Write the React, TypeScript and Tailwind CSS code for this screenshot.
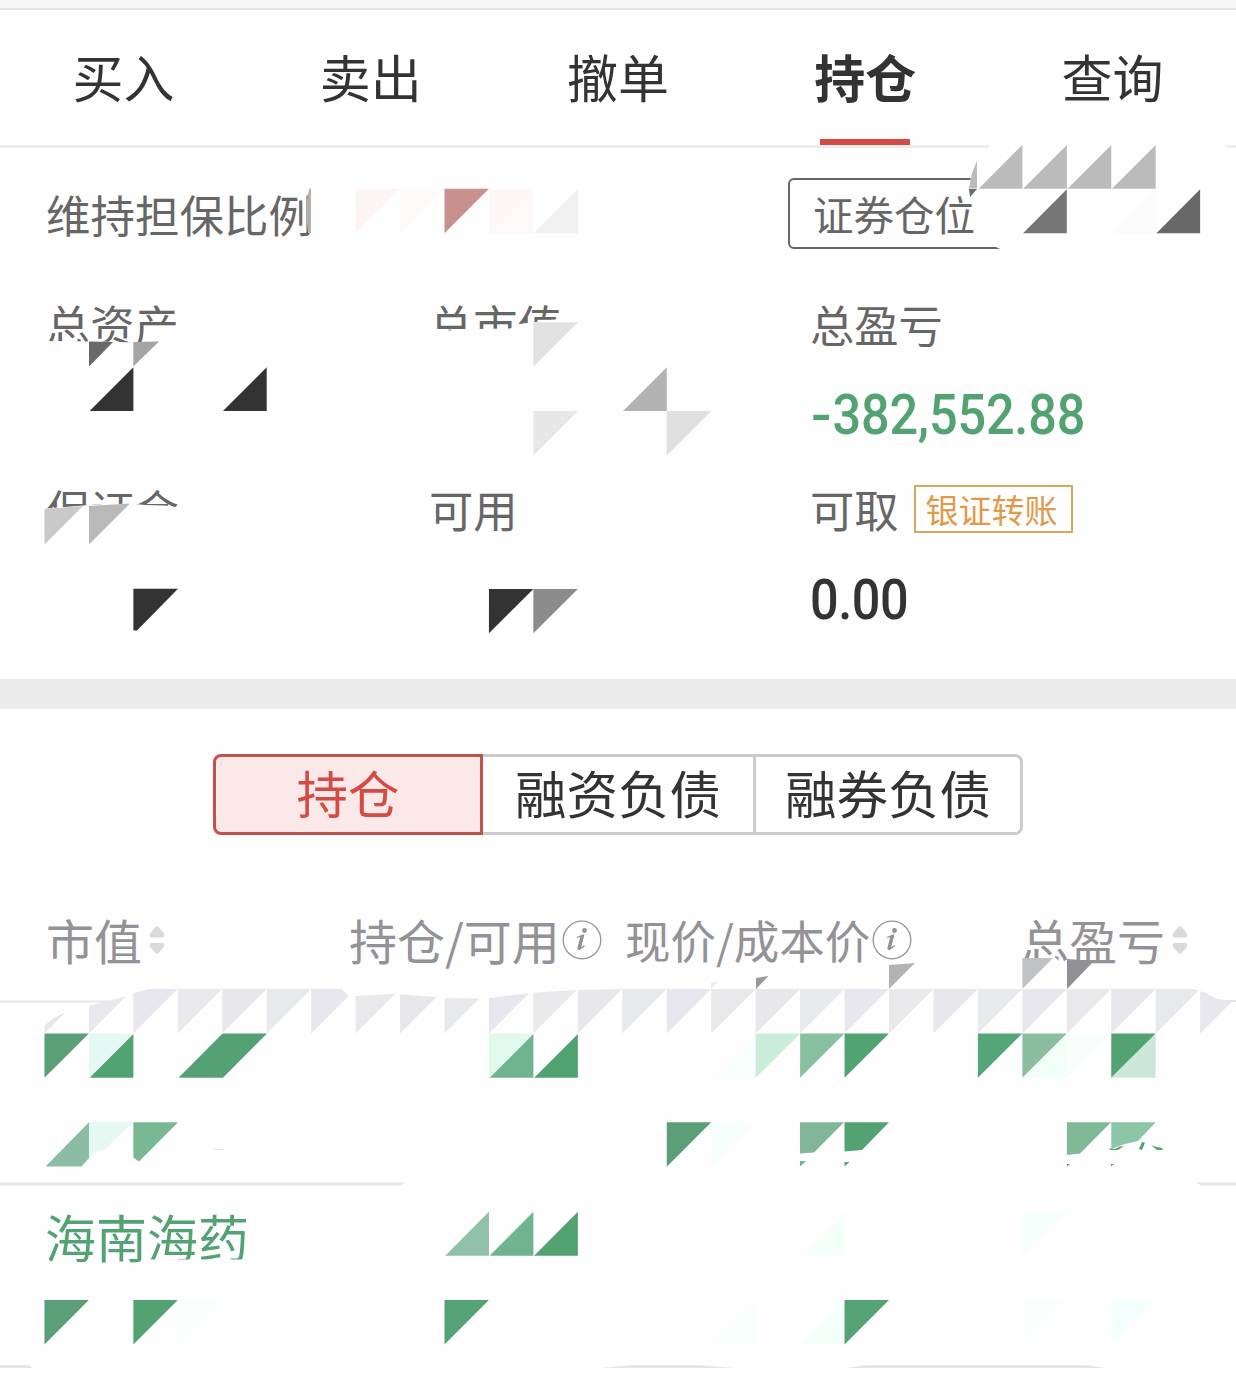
const GREEN = "#52a272"

const tabs = ["买入", "卖出", "撤单", "持仓", "查询"]

// side of one mosaic cell, and the y where the first mosaic row starts
const CELL = 44.45
const TOP = 144.4

// [column, row, half, colour]; "a" is the upper left half, "b" the lower right one
const cells: [number, number, string, string][] = [
  [22, 0, "b", "#bbbbbb"],
  [23, 0, "b", "#bbbbbb"],
  [24, 0, "b", "#bbbbbb"],
  [25, 0, "b", "#bbbbbb"],
  [8, 1, "a", "#fdf4f4"],
  [9, 1, "a", "#fffafa"],
  [10, 1, "a", "#c7918d"],
  [11, 1, "a", "#fef7f7"],
  [11, 1, "b", "#fef9f9"],
  [12, 1, "b", "#f0f0f0"],
  [23, 1, "b", "#767676"],
  [25, 1, "b", "#fbfbfb"],
  [26, 1, "b", "#686868"],
  [12, 4, "a", "#e1e1e1"],
  [2, 5, "b", "#333333"],
  [5, 5, "b", "#333333"],
  [14, 5, "b", "#b3b3b3"],
  [12, 6, "a", "#e7e7e7"],
  [15, 6, "a", "#e0e0e0"],
  [11, 10, "a", "#333333"],
  [12, 10, "a", "#8b8b8b"],
  [1, 20, "a", "#5a9f77"],
  [2, 20, "a", "#e5f8f3"],
  [2, 20, "b", GREEN],
  [11, 20, "a", "#e1f9ec"],
  [11, 20, "b", "#6eb48e"],
  [12, 20, "b", GREEN],
  [16, 20, "b", "#f8fffc"],
  [17, 20, "a", "#caecd8"],
  [18, 20, "a", "#88c0a0"],
  [19, 20, "a", GREEN],
  [22, 20, "a", "#55a577"],
  [23, 20, "a", "#8bbd9f"],
  [23, 20, "b", "#f2fff8"],
  [24, 20, "a", "#f9fefd"],
  [25, 20, "b", "#cce7da"],
  [25, 20, "a", GREEN],
  [15, 22, "a", "#5a9f77"],
  [16, 22, "a", "#f6fffc"],
  [10, 24, "b", "#90c0a8"],
  [11, 24, "b", "#70b48f"],
  [12, 24, "b", GREEN],
  [18, 24, "b", "#f5fffa"],
  [23, 24, "a", "#f5fffb"],
  [1, 26, "a", "#5b9f79"],
  [3, 26, "a", "#53a272"],
  [4, 26, "a", "#fafffd"],
  [10, 26, "a", "#55a276"],
  [16, 26, "b", "#f8fffc"],
  [18, 26, "b", "#f3fef9"],
  [19, 26, "a", "#55a374"],
  [23, 26, "a", "#fafffe"],
  [25, 26, "a", "#f4fffd"],
]

// cells whose edge was cut by the brush
const pieces: [string, string][] = [
  ["977,161 977,188.5 969,188.5 972,173", "#bbbbbb"],
  ["969,189 977,189 970,197", "#6b6b6b"],
  ["311,188.5 311,233 308,233 306,212 307.5,196 309.5,188.5", "#b0b0b0"],
  ["89,341.5 113,342 89,366.5", "#696969"],
  ["133.4,342 159,341.5 133.4,366.5", "#a5a5a5"],
  ["44.5,509 83,506 44.5,544.5", "#c9c9c9"],
  ["89,506 130,503.5 89,544.5", "#b9b9b9"],
  ["133.4,588.8 178,588.8 137,630.5 133.4,630.5", "#333333"],
  ["711,983 719,981 711,989", "#ececec"],
  ["756,978 768.5,976 756,989", "#98989d"],
  ["889,965 915,963 889,989", "#b3b3b3"],
  ["1022.4,958 1053,958 1022.4,989", "#c1c2c4"],
  ["1067,959 1094,961 1067,989", "#909095"],
  ["178.5,1077.7 222.5,1033.4 267,1033.4 223,1077.7", "#55a176"],
  ["89,1122.3 89,1158 81.5,1166.5 45.5,1166.5", "#8abda3"],
  ["89,1122.3 133,1122.3 105,1149 94,1153 89,1158", "#e5f8f2"],
  ["133.4,1122.3 178,1122.3 139,1161.5 133.4,1157.5", "#78b893"],
  ["800,1122.3 844,1122.3 814,1152.5 800,1153.5", "#81b798"],
  ["800,1161 806,1161 800,1166.5", "#6eb48e"],
  ["844.5,1122.3 889,1122.3 862,1150 844.5,1151.5", GREEN],
  ["844.5,1162 849.5,1162 844.5,1166.5", GREEN],
  ["1067,1122.3 1111,1122.3 1080,1153.5 1067,1155", "#7fb998"],
  ["1111.3,1122.3 1155.7,1122.3 1138,1141 1125,1144 1111.3,1149", "#8dc5a7"],
  ["1109,1148.5 1115,1149 1120,1146.5 1124,1146 1118,1150 1110,1150", GREEN],
  ["1139,1149 1142,1142 1145,1142.5 1142,1150", GREEN],
  ["1151,1145 1155,1146.5 1162,1148 1163,1150 1157,1150", GREEN],
  ["1067,1164 1070,1164 1067,1166.5", GREEN],
  ["1111,1164 1114,1164 1111,1166.5", GREEN],
  ["213,1148 217,1149 223,1149 222,1150 216,1150", "#d3e9dd"],
]

// background strokes that hide what lies under the mosaic
const erased = [
  "990,144 986,151 977,160 971,175 969,196 974,204 977,216 978,232 990,244 1002,250 1236,252 1228,148 1222,144",
  "40,341 100,341.5 135,342.5 185,341 185,367 40,367",
  "425,330 455,330.5 475,329 510,328.5 520,324 558,319 575,318 575,356 425,356",
  "40,509 83,505.5 130,503.5 145,505 165,505.5 182,508 182,545 40,545",
  "1018,958 1056,958 1062,965 1096,965 1096,989 1018,989",
  "140,1264 150,1259.5 252,1259.5 252,1282 140,1282",
]

const bandColors = ["#e8e8ec", "#e9e9eb", "#e8e7ed", "#e7e9ed"]

const points = (col: number, row: number, half: string) => {
  const x = col * CELL
  const y = TOP + row * CELL
  const r = x + CELL
  const b = y + CELL
  return half === "a" ? `${x},${y} ${r},${y} ${x},${b}` : `${r},${y + 0.5} ${r},${b} ${x + 0.7},${b}`
}

const Mosaic = () => (
  <svg className="pointer-events-none absolute top-0 left-0" width="1236" height="1392" viewBox="0 0 1236 1392">
    <clipPath id="band">
      <polygon points="44,1034 44,1026 52,1019 64,1013 89,1006 127,996 134,993 148,989 342,989 350,998 355,996 394,994 437,997 444,998 479,998.5 489,998 529,993 577,990 622,989 1193,989 1206,993 1217,999 1236,1001 1236,1034" />
    </clipPath>
    {erased.map((p) => (
      <polygon key={p} points={p} fill="#fefefe" />
    ))}
    <g clipPath="url(#band)">
      {Array.from({ length: 27 }, (_, i) => (
        <polygon key={i} points={points(i + 1, 19, "a")} fill={bandColors[(i * 3) % 4]} />
      ))}
    </g>
    {cells.map(([col, row, half, color]) => (
      <polygon key={`${col}-${row}-${half}`} points={points(col, row, half)} fill={color} />
    ))}
    {pieces.map(([p, color]) => (
      <polygon key={p} points={p} fill={color} />
    ))}
    <g fill="#e5e5ea">
      <polygon points="0,1000.5 112,1000.5 103,1002.5 0,1002.5" />
      <polygon points="1216,1000 1236,1000 1236,1002 1222,1002" />
      <polygon points="0,1182.5 405,1182.5 400,1185.5 0,1185.5" />
      <polygon points="1196,1182.5 1236,1182.5 1236,1185.5 1201,1185.5" />
      <polygon points="0,1365.3 30,1365.3 32,1368 0,1368" />
      <polygon points="602,1368 630,1365.3 700,1365.3 734,1368" />
      <polygon points="846,1368 866,1365.3 1086,1365.3 1106,1368" />
    </g>
  </svg>
)

const Sort = () => (
  <svg className="ml-[7px] mt-[1px]" width="16" height="30" viewBox="0 0 16 30" fill="#dadada">
    <path d="M6 2.500Q8 0 10 2.500L14.500 8Q16.500 12 13.500 12.500H2.500Q-.5 12 1.500 8Z" />
    <path d="M6 27.500Q8 30 10 27.500L14.500 22.500Q16.500 18.500 13.500 18H2.500Q-.5 18.500 1.500 22.500Z" />
  </svg>
)

const Info = () => (
  <svg className="ml-[2px] mt-[2px]" width="40" height="40" viewBox="0 0 40 40">
    <circle cx="20" cy="20" r="18.800" fill="none" stroke="#96969a" strokeWidth="1.300" />
    <path d="M15 17.500Q18 16.500 21.500 15Q20 21 18 28Q18 29.500 22.500 25.500" fill="none" stroke="#929296" strokeWidth="1.300" />
    <path d="M20 16.500L17 28.500" fill="none" stroke="#929296" strokeWidth="3.200" strokeLinecap="round" />
    <circle cx="22.500" cy="10.500" r="2.400" fill="#929296" />
  </svg>
)

const App = () => {
  return (
    <div className="relative flex h-[1392px] w-[1236px] flex-col overflow-hidden bg-[#fefefe] font-['Noto_Sans_CJK_SC',sans-serif] text-[#333]">
      <div className="h-[10px] shrink-0 border-b-2 border-[#e4e5e7] bg-[#f7f7f7]"></div>

      <nav className="grid h-[138px] shrink-0 grid-cols-5 border-b-3 border-[#ededed]">
        {tabs.map((tab) => (
          <div key={tab} className="flex flex-col items-center justify-between">
            <span className={tab === "持仓" ? "pt-[28px] text-[51px] leading-[76px] font-bold" : "pt-[28px] text-[51px] leading-[76px]"}>{tab}</span>
            {tab === "持仓" && <span className="h-[6px] w-[90px] bg-[#d34b43]"></span>}
          </div>
        ))}
      </nav>

      <section className="h-[531px] shrink-0 text-[#666]">
        <div className="mt-[30px] flex h-[71px] items-center justify-between pr-[36px] pl-[46px]">
          <span className="text-[44.500px] leading-[66px]">维持担保比例</span>
          <span className="flex h-[71px] w-[412px] items-center rounded-md border-2 border-[#666] pt-[2px] pl-[23px] text-[40.500px]">证券仓位</span>
        </div>
        <div className="mt-[42px] grid grid-cols-[383px_381px_1fr] pl-[46px] text-[44.300px] leading-[66px]">
          <div className="h-[185px]">总资产</div>
          <div className="h-[185px]">总市值</div>
          <div className="h-[185px]">
            <div>总盈亏</div>
            <div className="mt-[25px] ml-[1px] flex origin-left scale-x-90 font-[Roboto,sans-serif] text-[56px] font-medium tracking-[-0.2px] text-[#52a272]">
              <span className="mr-[5px] origin-left scale-x-120">-</span>382,552.88
            </div>
          </div>
          <div>保证金</div>
          <div>可用</div>
          <div>
            <div className="flex items-center">
              可取
              <span className="ml-[15px] flex h-[48px] w-[159px] items-center justify-center border-2 border-[#dca55f] pr-[3px] text-[33px] text-[#e09a4c]">银证转账</span>
            </div>
            <div className="mt-[25px] origin-left scale-x-90 font-[Roboto,sans-serif] text-[56px] font-medium tracking-[-0.5px] text-[#333]">0.00</div>
          </div>
        </div>
      </section>

      <div className="h-[30px] shrink-0 bg-[#ececec]"></div>

      <div className="mx-auto mt-[45px] flex h-[81px] w-[810px] shrink-0 text-[51.500px] leading-[69px]">
        <div className="w-[270px] rounded-l-lg border-3 border-[#c4514c] bg-[#fbe9e9] text-center text-[#d34b43]">持仓</div>
        <div className="w-[273px] border-y-3 border-r-3 border-[#ccc] text-center">融资负债</div>
        <div className="flex-1 rounded-r-lg border-3 border-l-0 border-[#ccc] text-center">融券负债</div>
      </div>

      <div className="mt-[68px] grid h-[72px] shrink-0 grid-cols-[303px_276px_396px_1fr] pl-[46px] text-[48px] text-[#929297]">
        <div className="flex items-center">
          市值
          <Sort />
        </div>
        <div className="flex items-center">
          持仓/可用
          <Info />
        </div>
        <div className="flex items-center text-[45.500px]">
          现价/成本价
          <Info />
        </div>
        <div className="flex items-center">
          总盈亏
          <Sort />
        </div>
      </div>

      <div className="mt-[223px] pl-[45px] text-[51px] leading-[76px] text-[#52a272]">海南海药</div>

      <Mosaic />
    </div>
  )
}

export default App
